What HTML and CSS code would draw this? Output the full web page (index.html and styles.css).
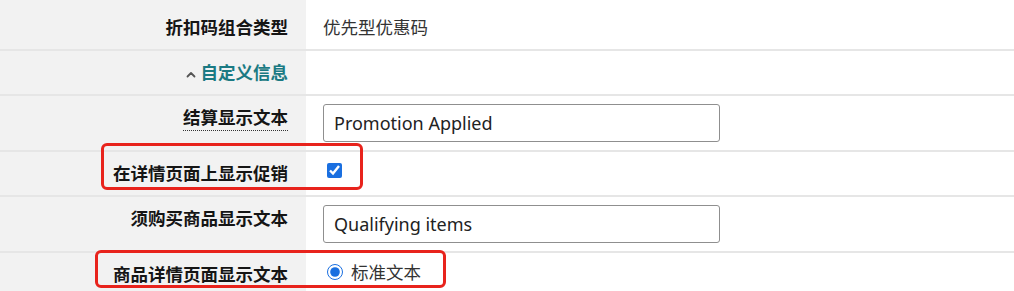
FILE: index.html
```html
<!DOCTYPE html>
<html lang="zh-CN">
<head>
<meta charset="utf-8">
<title>自定义信息</title>
<link rel="stylesheet" href="styles.css">
</head>
<body>
<div class="form">
  <div class="row row-stub">
    <div class="label"></div>
    <div class="value"></div>
  </div>
  <div class="row row-short">
    <div class="label"><span>折扣码组合类型</span></div>
    <div class="value"><span class="plain">优先型优惠码</span></div>
  </div>
  <div class="row row-short">
    <div class="label"><span class="section"><svg class="caret" width="10" height="7" viewBox="0 0 10 7"><path d="M1.5 5.5 L5 2 L8.5 5.5" fill="none" stroke="#555" stroke-width="1.8" stroke-linecap="round" stroke-linejoin="round"/></svg>自定义信息</span></div>
    <div class="value"></div>
  </div>
  <div class="row row-tall">
    <div class="label"><span class="hint">结算显示文本</span></div>
    <div class="value"><input class="text" type="text" value="Promotion Applied"></div>
  </div>
  <div class="row row-short">
    <div class="label"><span>在详情页面上显示促销</span></div>
    <div class="value"><input class="check" type="checkbox" checked></div>
  </div>
  <div class="row row-tall">
    <div class="label"><span>须购买商品显示文本</span></div>
    <div class="value"><input class="text" type="text" value="Qualifying items"></div>
  </div>
  <div class="row row-last">
    <div class="label"><span>商品详情页面显示文本</span></div>
    <div class="value"><label class="radio-line"><input class="radio" type="radio" name="t" checked><span>标准文本</span></label></div>
  </div>
  <div class="mark mark-one"></div>
  <div class="mark mark-two"></div>
</div>
</body>
</html>
```

FILE: styles.css
```css
html, body {
  margin: 0;
  padding: 0;
  background: #ffffff;
}

body {
  width: 1014px;
  height: 291px;
  overflow: hidden;
  font-family: "Noto Sans CJK SC", "Noto Sans", sans-serif;
  color: #111;
}

.form {
  position: relative;
  width: 1014px;
}

.row {
  display: grid;
  grid-template-columns: 306px 1fr;
  border-top: 2px solid #e6e6e6;
}

.row-stub {
  border-top: none;
  height: 4px;
}

.row-short { height: 43px; }
.row-tall { height: 54px; }
.row-last { height: 40px; }

.label {
  background: #f2f2f2;
  text-align: right;
  padding: 9px 18px 0 0;
  font-size: 17.5px;
  line-height: 24px;
  font-weight: 700;
  color: #151515;
}

.value {
  background: #ffffff;
  padding: 0 0 0 17px;
}

.plain {
  display: block;
  padding-top: 9px;
  font-size: 17.5px;
  line-height: 24px;
  color: #333;
}

.section {
  color: #1b7a83;
}

.caret {
  display: inline-block;
  margin-right: 5px;
  vertical-align: 1px;
}

.hint {
  border-bottom: 1.5px dotted #333;
  padding-bottom: 1px;
}

.text {
  box-sizing: border-box;
  margin: 8px 0 0 0;
  width: 397px;
  height: 38px;
  border: 1px solid #8f8f8f;
  border-radius: 3px;
  padding: 0 10px;
  font-family: "Noto Sans", "Noto Sans CJK SC", sans-serif;
  font-size: 18px;
  color: #222;
  background: #fff;
}

.check {
  margin: 11px 0 0 4px;
  width: 15px;
  height: 15px;
  accent-color: #1a6fe0;
}

.radio-line {
  display: flex;
  align-items: center;
  gap: 8px;
  padding-top: 7px;
  font-size: 17.5px;
  line-height: 24px;
  color: #333;
}

.radio {
  margin: 0 0 0 4px;
  width: 16px;
  height: 16px;
  accent-color: #1a6fe0;
}

.mark {
  position: absolute;
  box-sizing: border-box;
  border: 3px solid #e8231c;
  border-radius: 6px;
}

.mark-one {
  left: 101px;
  top: 143px;
  width: 262px;
  height: 47px;
}

.mark-two {
  left: 95px;
  top: 250px;
  width: 351px;
  height: 38px;
}
```
